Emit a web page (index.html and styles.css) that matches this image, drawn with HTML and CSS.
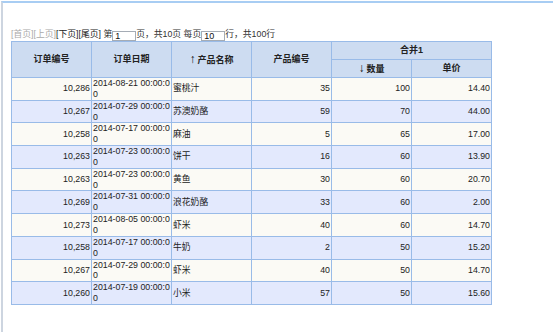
FILE: index.html
```html
<!DOCTYPE html>
<html>
<head>
<meta charset="utf-8">
<link rel="stylesheet" href="styles.css">
</head>
<body>
<div class="frame">
  <div class="pager"><span class="off">[首页][上页]</span><span class="on">[下页][尾页]</span> 第<input class="box" value="1">页，共10页 每页<input class="box" value="10">行，共100行</div>
  <table class="grid">
    <colgroup><col><col><col><col><col><col></colgroup>
    <thead>
      <tr class="h1">
        <th rowspan="2">订单编号</th>
        <th rowspan="2">订单日期</th>
        <th rowspan="2"><span class="arr">↑</span>产品名称</th>
        <th rowspan="2">产品编号</th>
        <th colspan="2">合并1</th>
      </tr>
      <tr class="h2">
        <th><span class="arr">↓</span>数量</th>
        <th>单价</th>
      </tr>
    </thead>
    <tbody>
      <tr class="odd"><td class="num">10,286</td><td class="date">2014-08-21 00:00:00</td><td class="txt">蜜桃汁</td><td class="num">35</td><td class="num">100</td><td class="num">14.40</td></tr>
      <tr class="even"><td class="num">10,267</td><td class="date">2014-07-29 00:00:00</td><td class="txt">苏澳奶酪</td><td class="num">59</td><td class="num">70</td><td class="num">44.00</td></tr>
      <tr class="odd"><td class="num">10,258</td><td class="date">2014-07-17 00:00:00</td><td class="txt">麻油</td><td class="num">5</td><td class="num">65</td><td class="num">17.00</td></tr>
      <tr class="even"><td class="num">10,263</td><td class="date">2014-07-23 00:00:00</td><td class="txt">饼干</td><td class="num">16</td><td class="num">60</td><td class="num">13.90</td></tr>
      <tr class="odd"><td class="num">10,263</td><td class="date">2014-07-23 00:00:00</td><td class="txt">黄鱼</td><td class="num">30</td><td class="num">60</td><td class="num">20.70</td></tr>
      <tr class="even"><td class="num">10,269</td><td class="date">2014-07-31 00:00:00</td><td class="txt">浪花奶酪</td><td class="num">33</td><td class="num">60</td><td class="num">2.00</td></tr>
      <tr class="odd"><td class="num">10,273</td><td class="date">2014-08-05 00:00:00</td><td class="txt">虾米</td><td class="num">40</td><td class="num">60</td><td class="num">14.70</td></tr>
      <tr class="even"><td class="num">10,258</td><td class="date">2014-07-17 00:00:00</td><td class="txt">牛奶</td><td class="num">2</td><td class="num">50</td><td class="num">15.20</td></tr>
      <tr class="odd"><td class="num">10,267</td><td class="date">2014-07-29 00:00:00</td><td class="txt">虾米</td><td class="num">40</td><td class="num">50</td><td class="num">14.70</td></tr>
      <tr class="even"><td class="num">10,260</td><td class="date">2014-07-19 00:00:00</td><td class="txt">小米</td><td class="num">57</td><td class="num">50</td><td class="num">15.60</td></tr>
    </tbody>
  </table>
</div>
</body>
</html>
```
FILE: styles.css
```css
html, body {
  margin: 0;
  padding: 0;
  background: #fff;
}
body {
  padding-top: 1px;
  font-family: "Liberation Sans", "Noto Sans CJK SC", sans-serif;
  color: #222;
}
.frame {
  margin-left: 1px;
  border-top: 2px solid #a8cdf3;
  border-left: 2px solid #cdd5e0;
  height: 331px;
  box-sizing: border-box;
  padding: 26px 0 0 8px;
}
.pager {
  font-size: 8.8px;
  line-height: 11px;
  height: 12px;
  white-space: nowrap;
  color: #333;
}
.pager .off { color: #aaa; }
.pager .on { color: #222; }
.box {
  width: 24px;
  height: 10px;
  box-sizing: border-box;
  border: 1px solid #a5acb5;
  padding: 0 0 0 2px;
  margin: 0;
  font: 9px/8px "Liberation Sans", sans-serif;
  color: #111;
  background: #fff;
  vertical-align: -2px;
}
.grid {
  border-collapse: collapse;
  table-layout: fixed;
  width: 481px;
  border: 1px solid #99bbe8;
}
.grid col { width: 80px; }
.grid th {
  background: #cddcf1;
  border: 1px solid #99bbe8;
  font-size: 9px;
  font-weight: bold;
  color: #222;
  text-align: center;
  padding: 0;
  height: 17px;
  line-height: 11px;
}
.arr {
  font-size: 12px;
  font-weight: normal;
  color: #111;
  margin-right: 2px;
}
.grid td {
  border: 1px solid #99bbe8;
  font-size: 8.8px;
  line-height: 10.85px;
  height: 21.7px;
  padding: 0 1px;
  vertical-align: middle;
  color: #222;
}
.grid .odd td { background: #fbfaf5; }
.grid .even td { background: #e3e9fd; }
.grid td.num { text-align: right; }
.grid td.txt { text-align: left; }
.grid td.date {
  text-align: left;
  word-break: break-all;
}
```
